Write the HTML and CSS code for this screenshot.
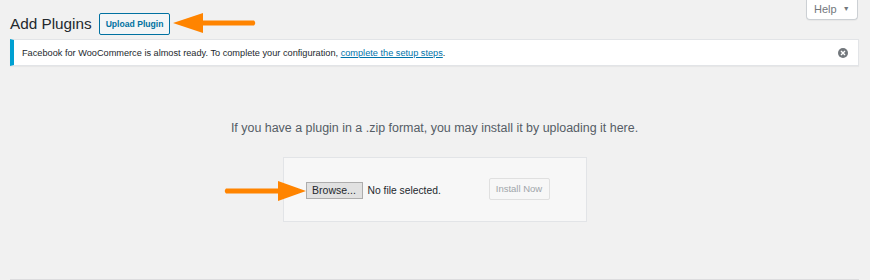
FILE: index.html
```html
<!DOCTYPE html>
<html lang="en">
<head>
    <meta charset="UTF-8">
    <meta name="viewport" content="width=device-width, initial-scale=1.0">
    <title>Add Plugins</title>
    <link rel="stylesheet" href="styles.css">
</head>
<body>
    <div class="screen-meta-links">
        <button class="help-tab">Help <span class="caret">&#9660;</span></button>
    </div>

    <div class="wrap">
        <div class="page-title">
            <h1>Add Plugins</h1>
            <button class="page-title-action">Upload Plugin</button>
            <svg class="arrow-left" width="88" height="24" viewBox="0 0 88 24">
                <path d="M32 9.5 L83 9.5 Q85.5 12 83 14.5 L32 14.5 L32 22 L2 12 L32 2 Z" fill="#ff8400"/>
            </svg>
        </div>

        <div class="notice">
            <p>Facebook for WooCommerce is almost ready. To complete your configuration, <a href="#">complete the setup steps</a>.</p>
            <button class="notice-dismiss" aria-label="Dismiss">
                <svg width="10" height="10" viewBox="0 0 10 10">
                    <circle cx="5" cy="5" r="5" fill="#72777c"/>
                    <path d="M3 3 L7 7 M7 3 L3 7" stroke="#fff" stroke-width="1.4"/>
                </svg>
            </button>
        </div>

        <div class="upload-plugin">
            <p class="install-help">If you have a plugin in a .zip format, you may install it by uploading it here.</p>
            <form class="wp-upload-form">
                <svg class="arrow-right" width="86" height="24" viewBox="0 0 86 24">
                    <path d="M56 9.5 L4 9.5 Q1.5 12 4 14.5 L56 14.5 L56 22 L84 12 L56 2 Z" fill="#ff8400"/>
                </svg>
                <div class="file-field">
                    <span class="browse-btn">Browse...</span>
                    <span class="file-name">No file selected.</span>
                </div>
                <button class="install-btn" disabled>Install Now</button>
            </form>
        </div>

        <div class="plugin-list"></div>
    </div>
</body>
</html>
```

FILE: styles.css
```css
body {
    margin: 0;
    background: #f1f1f1;
    color: #23282d;
    font-family: "Liberation Sans", Arial, sans-serif;
    font-size: 13px;
    overflow: hidden;
}
button {
    font-family: inherit;
}
.screen-meta-links {
    float: right;
    margin-right: 12px;
}
.help-tab {
    display: block;
    height: 20px;
    width: 52px;
    padding: 0 0 2px 7px;
    border: 1px solid #ccd0d4;
    border-top: none;
    border-radius: 0 0 4px 4px;
    background: #fff;
    color: #72777c;
    font-size: 11px;
    text-align: left;
    box-shadow: 0 1px 1px rgba(0,0,0,0.04);
}
.help-tab .caret {
    font-size: 7px;
    margin-left: 3px;
    vertical-align: 2px;
    color: #72777c;
}
.wrap {
    padding: 0 11px 0 10px;
}
.page-title {
    display: flex;
    align-items: center;
    padding-top: 12px;
}
.page-title h1 {
    margin: 0;
    font-size: 15.3px;
    font-weight: 400;
    line-height: 23px;
    color: #23282d;
}
.page-title-action {
    margin-left: 7px;
    height: 22px;
    padding: 0 6px;
    border: 1px solid #0071a1;
    border-radius: 2px;
    background: #f3f5f6;
    color: #0071a1;
    font-size: 8.6px;
    font-weight: 700;
}
.arrow-left {
    margin-left: 1px;
    margin-top: -2px;
}
.notice {
    display: flex;
    align-items: center;
    justify-content: space-between;
    margin-top: 4px;
    height: 25px;
    padding: 0 10px 0 8px;
    background: #fff;
    border: 1px solid #e2e4e7;
    border-left: 4px solid #00a0d2;
    box-shadow: 0 1px 1px rgba(0,0,0,0.04);
}
.notice p {
    margin: 0;
    font-size: 9.2px;
}
.notice a {
    color: #0073aa;
}
.notice-dismiss {
    display: flex;
    padding: 0;
    border: none;
    background: none;
}
.upload-plugin {
    display: flex;
    flex-direction: column;
    align-items: center;
    padding-top: 52px;
}
.install-help {
    margin: 0 0 19px;
    font-size: 12.45px;
    line-height: 20px;
    color: #555d66;
}
.wp-upload-form {
    position: relative;
    display: flex;
    align-items: center;
    justify-content: space-between;
    box-sizing: border-box;
    width: 304px;
    height: 65px;
    padding: 0 36px 2px 22px;
    background: #f7f7f7;
    border: 1px solid #e2e4e7;
}
.arrow-right {
    position: absolute;
    left: -62px;
    top: 21px;
}
.file-field {
    display: flex;
    align-items: center;
    gap: 5px;
    font-size: 10.3px;
    color: #23282d;
}
.browse-btn {
    box-sizing: border-box;
    height: 17px;
    width: 57px;
    line-height: 15px;
    font-size: 10.5px;
    text-align: center;
    background: #e1e1e1;
    border: 1px solid #adadad;
    margin-top: 4px;
}
.file-name {
    margin-top: 4px;
}
.install-btn {
    height: 22px;
    width: 61px;
    padding: 0;
    border: 1px solid #e0e0e0;
    border-radius: 2px;
    background: #f7f7f7;
    color: #a0a5aa;
    font-size: 9.5px;
}
.plugin-list {
    margin-top: 57px;
    height: 40px;
    background: #fff;
    border: 1px solid #dcdcde;
}
```
